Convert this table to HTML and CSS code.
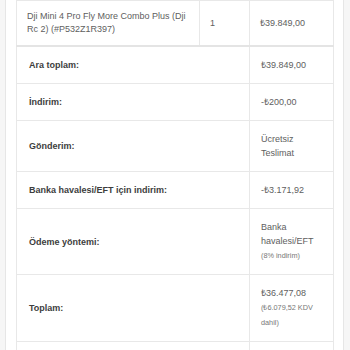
FILE: index.html
```html
<!DOCTYPE html>
<html lang="tr">
<head>
<meta charset="utf-8">
<title>Sipariş detayları</title>
<link rel="stylesheet" href="styles.css">
</head>
<body>
<div class="page">
  <div class="card">
    <table class="order">
      <colgroup>
        <col class="c1"><col class="c2"><col class="c3">
      </colgroup>
      <tbody>
        <tr class="item">
          <td>Dji Mini 4 Pro Fly More Combo Plus (Dji Rc 2) (#P532Z1R397)</td>
          <td>1</td>
          <td>₺39.849,00</td>
        </tr>
      </tbody>
      <tfoot>
        <tr><th colspan="2">Ara toplam:</th><td>₺39.849,00</td></tr>
        <tr><th colspan="2">İndirim:</th><td>-₺200,00</td></tr>
        <tr><th colspan="2">Gönderim:</th><td>Ücretsiz Teslimat</td></tr>
        <tr><th colspan="2">Banka havalesi/EFT için indirim:</th><td>-₺3.171,92</td></tr>
        <tr><th colspan="2">Ödeme yöntemi:</th><td>Banka havalesi/EFT<br><small>(8% indirim)</small></td></tr>
        <tr><th colspan="2">Toplam:</th><td>₺36.477,08<br><small>(₺6.079,52 KDV dahil)</small></td></tr>
        <tr class="r-next"><th colspan="2"></th><td></td></tr>
      </tfoot>
    </table>
  </div>
</div>
</body>
</html>
```
FILE: styles.css
```css
html, body {
  margin: 0;
  padding: 0;
  background: #f6f6f6;
}
body {
  font-family: "Liberation Sans", Arial, sans-serif;
  font-size: 9px;
  color: #5e5e5e;
}
.page {
  padding: 0 6px 0 5px;
  margin-top: -11px;
}
.card {
  background: #fff;
  border: 1px solid #e6e6e6;
  padding: 10px;
}
.order {
  width: 317px;
  border-collapse: collapse;
  table-layout: fixed;
}
.c1 { width: 183px; }
.c2 { width: 50px; }
.c3 { width: 84px; }
.order td, .order th {
  border: 1px solid #e8e8e8;
  text-align: left;
  vertical-align: middle;
}
.item td {
  padding: 9px 10px;
  line-height: 13px;
  border-bottom: 2px solid #e4e4e4;
}
.order tfoot td, .order tfoot th {
  padding: 11px 11px 11px 11px;
  line-height: 14px;
}
.order tfoot th {
  padding-left: 12px;
  font-weight: bold;
  color: #3d3d3d;
}
.order small {
  font-size: 7.3px;
  line-height: 14px;
  color: #777;
}
.r-next th, .r-next td { height: 40px; }
```
